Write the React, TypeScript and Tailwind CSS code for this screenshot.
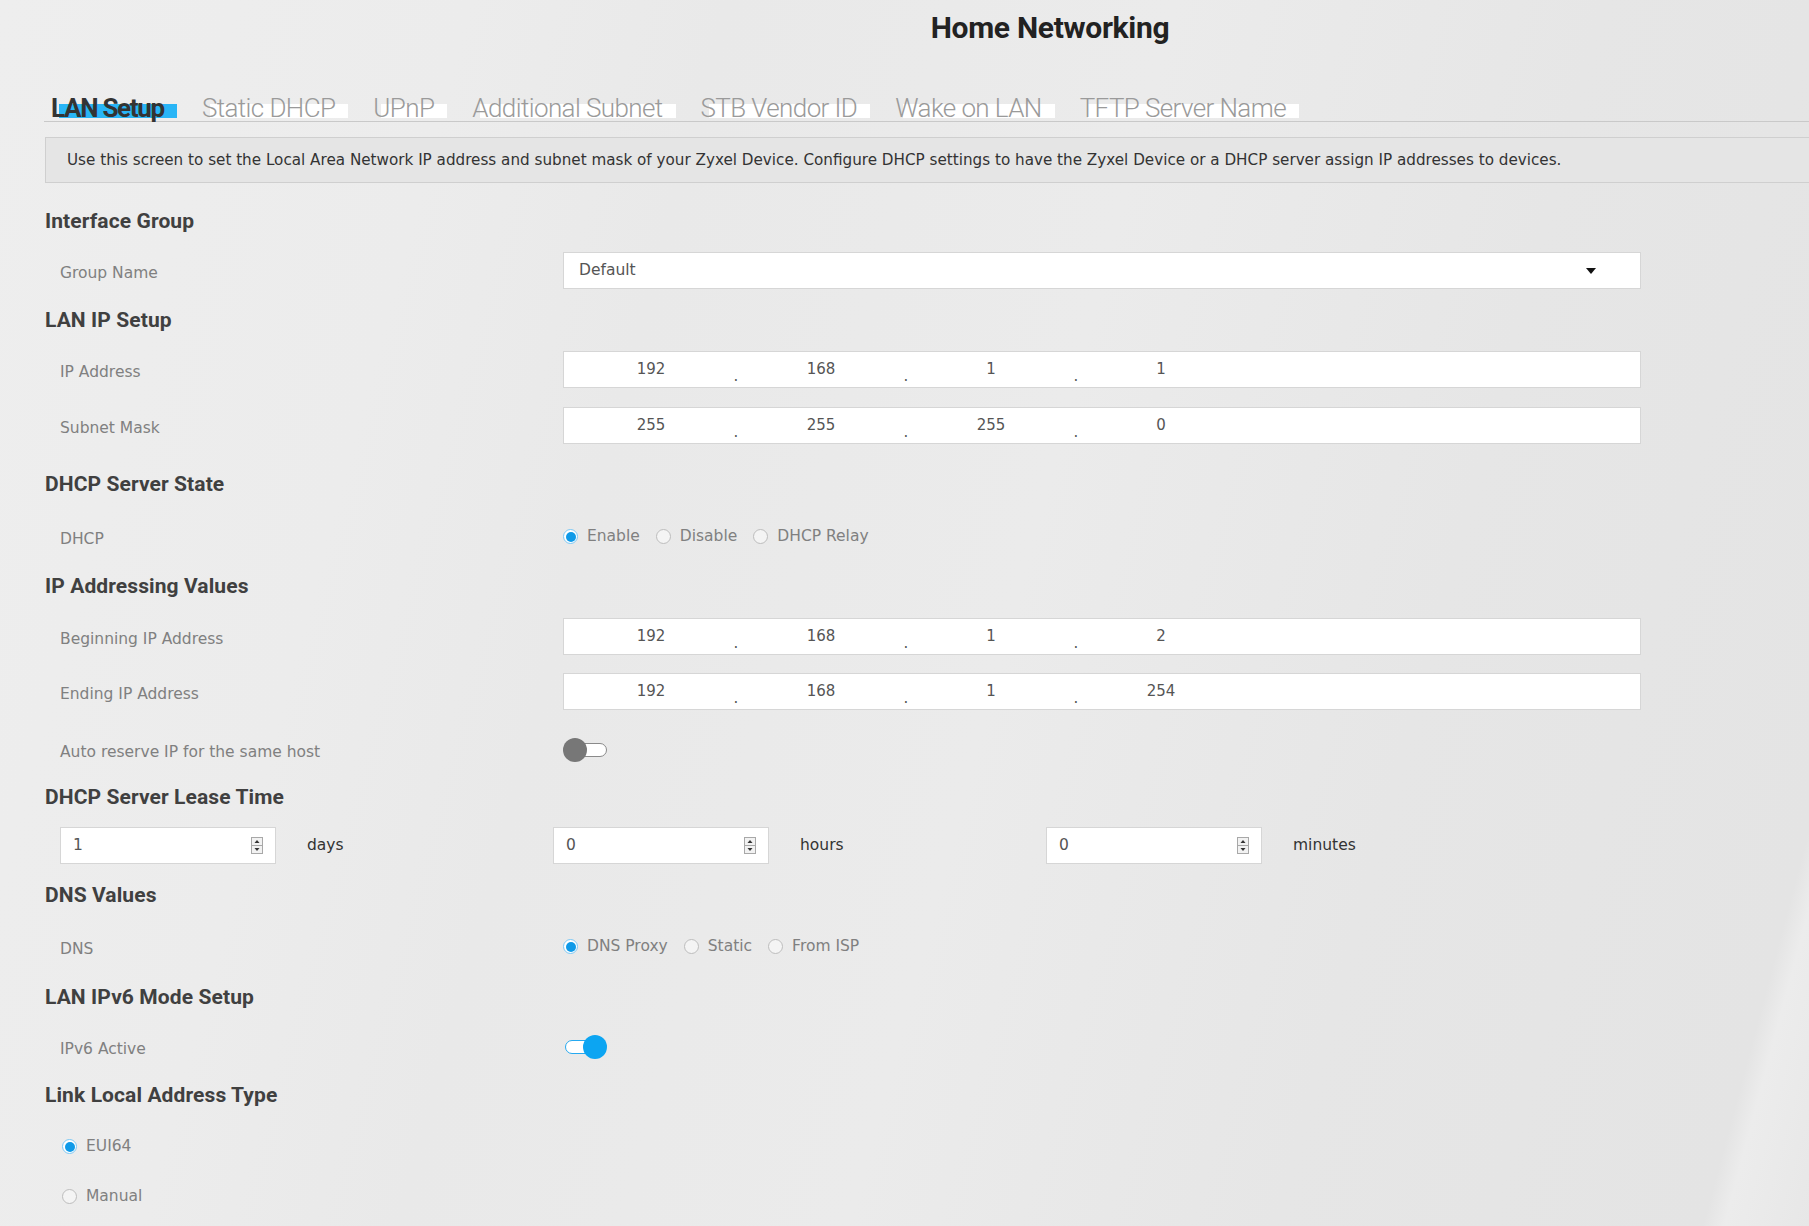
import React from "react";

const TABS = [
  { label: "LAN Setup", active: true },
  { label: "Static DHCP" },
  { label: "UPnP" },
  { label: "Additional Subnet" },
  { label: "STB Vendor ID" },
  { label: "Wake on LAN" },
  { label: "TFTP Server Name" },
];

const body = "font-['DejaVu_Sans',sans-serif]";
const head = "font-['Roboto',sans-serif]";

function Heading({ children, className = "" }: { children: React.ReactNode; className?: string }) {
  return (
    <div className={`flex h-[36px] items-center text-[21px] font-bold tracking-[0.1px] text-[#404040] ${head} ${className}`}>
      {children}
    </div>
  );
}

function Row({ label, children, className = "" }: { label: string; children: React.ReactNode; className?: string }) {
  return (
    <div className={`flex h-[37px] items-center ${className}`}>
      <div className={`w-[518px] shrink-0 pl-[15px] pt-[6px] text-[15.5px] text-[#808080] ${body}`}>{label}</div>
      <div className="flex flex-1 items-center">{children}</div>
    </div>
  );
}

function IpBox({ parts }: { parts: string[] }) {
  return (
    <div className={`flex h-[37px] w-[1078px] items-stretch border border-[#d6d6d6] bg-white pl-[4px] text-[15px] text-[#555] ${body}`}>
      {parts.map((p, i) => (
        <React.Fragment key={i}>
          <div className="flex w-[166px] items-center justify-center">{p}</div>
          {i < 3 && <div className="flex w-[4px] items-end justify-center pb-[3px] leading-none">.</div>}
        </React.Fragment>
      ))}
    </div>
  );
}

function Radio({ checked, label }: { checked?: boolean; label: string }) {
  return (
    <label className={`mr-[16px] flex items-center text-[15.5px] text-[#808080] ${body}`}>
      <span
        className={`mr-[9px] flex h-[15px] w-[15px] items-center justify-center rounded-full border ${
          checked ? "border-[#7cc8f4] bg-white" : "border-[#bdbdbd] bg-[#f4f4f4]"
        }`}
      >
        {checked && <span className="h-[10px] w-[10px] rounded-full bg-[#0f9ae8]" />}
      </span>
      {label}
    </label>
  );
}

function Toggle({ on }: { on?: boolean }) {
  return on ? (
    <div className="relative ml-[2px] h-[24px] w-[42px]">
      <div className="absolute left-0 top-[5px] h-[14px] w-[36px] rounded-full border border-[#26a9f0] bg-white" />
      <div className="absolute right-0 top-0 h-[24px] w-[24px] rounded-full bg-[#0ca5f2]" />
    </div>
  ) : (
    <div className="relative h-[24px] w-[44px]">
      <div className="absolute right-0 top-[5px] h-[14px] w-[36px] rounded-full border border-[#8a8a8a] bg-white" />
      <div className="absolute left-0 top-0 h-[24px] w-[24px] rounded-full bg-[#777777]" />
    </div>
  );
}

function Spinner() {
  return (
    <svg width="12" height="17" viewBox="0 0 12 17" className="shrink-0">
      <rect x="0.5" y="0.5" width="11" height="16" fill="#f2f2f2" stroke="#a8a8a8" />
      <line x1="0.5" y1="8.5" x2="11.5" y2="8.5" stroke="#a8a8a8" />
      <path d="M3.5 6 L6 3 L8.5 6 Z" fill="#333" />
      <path d="M3.5 11 L6 14 L8.5 11 Z" fill="#333" />
    </svg>
  );
}

function NumberBox({ value, unit }: { value: string; unit: string }) {
  return (
    <div className="flex w-[493px] shrink-0 items-center">
      <div className={`flex h-[37px] w-[216px] items-center justify-between border border-[#d6d6d6] bg-white pl-[12px] pr-[12px] text-[15.5px] text-[#555] ${body}`}>
        <span>{value}</span>
        <Spinner />
      </div>
      <span className={`ml-[31px] text-[15.5px] text-[#333] ${body}`}>{unit}</span>
    </div>
  );
}

export default function App() {
  return (
    <div className="min-h-screen w-full overflow-hidden bg-[#eaeaea] bg-[linear-gradient(105deg,#eeeeee_0%,#ececec_22%,#e9e9e9_34%,#ebebeb_55%,#e6e6e6_75%,#e4e4e4_95%,#ececec_96%,#e7e7e7_100%)] pb-[14px]">
      <div className={`flex h-[54px] items-center justify-center pl-[291px] text-[30px] font-bold tracking-[-0.3px] text-[#222] ${head}`}>
        Home Networking
      </div>

      <div className="ml-[44px] mt-[41px] flex items-end border-b border-[#c9c9c9]">
        {TABS.map((t, i) => (
          <div key={t.label} className={`relative ${i === 0 ? "ml-[7px]" : "ml-[38px]"}`}>
            <span
              className={`absolute bottom-[3px] left-[8px] right-[-13px] h-[14px] ${t.active ? "bg-[#29b5f6]" : "bg-white"}`}
            />
            <span
              className={`relative block text-[26px] leading-[26px] ${head} ${
                t.active ? "font-bold tracking-[-1.3px] text-[#333]" : "font-light tracking-[-0.6px] text-[#9a9a9a]"
              }`}
            >
              {t.label}
            </span>
          </div>
        ))}
      </div>

      <div className="ml-[45px] mt-[15px]">
        <div className={`flex h-[46px] items-center border-y border-l border-[#cfcfcf] bg-[#e5e5e5] pl-[21px] text-[15.2px] text-[#333] ${body}`}>
          Use this screen to set the Local Area Network IP address and subnet mask of your Zyxel Device. Configure DHCP settings to have the Zyxel Device or a DHCP server assign IP addresses to devices.
        </div>

        <Heading className="mt-[21px]">Interface Group</Heading>
        <Row label="Group Name" className="mt-[12px]">
          <div className={`flex h-[37px] w-[1078px] items-center justify-between border border-[#d6d6d6] bg-white pl-[15px] pr-[44px] text-[15.5px] text-[#555] ${body}`}>
            <span>Default</span>
            <svg width="10" height="6" viewBox="0 0 10 6">
              <path d="M0 0 L10 0 L5 6 Z" fill="#111" />
            </svg>
          </div>
        </Row>

        <Heading className="mt-[14px]">LAN IP Setup</Heading>
        <Row label="IP Address" className="mt-[12px]">
          <IpBox parts={["192", "168", "1", "1"]} />
        </Row>
        <Row label="Subnet Mask" className="mt-[19px]">
          <IpBox parts={["255", "255", "255", "0"]} />
        </Row>

        <Heading className="mt-[23px]">DHCP Server State</Heading>
        <Row label="DHCP" className="mt-[15px]">
          <Radio checked label="Enable" />
          <Radio label="Disable" />
          <Radio label="DHCP Relay" />
        </Row>

        <Heading className="mt-[14px]">IP Addressing Values</Heading>
        <Row label="Beginning IP Address" className="mt-[13px]">
          <IpBox parts={["192", "168", "1", "2"]} />
        </Row>
        <Row label="Ending IP Address" className="mt-[18px]">
          <IpBox parts={["192", "168", "1", "254"]} />
        </Row>
        <Row label="Auto reserve IP for the same host" className="mt-[21px]">
          <Toggle />
        </Row>

        <Heading className="mt-[12px]">DHCP Server Lease Time</Heading>
        <div className="mt-[11px] flex h-[37px] items-center pl-[15px]">
          <NumberBox value="1" unit="days" />
          <NumberBox value="0" unit="hours" />
          <NumberBox value="0" unit="minutes" />
        </div>

        <Heading className="mt-[14px]">DNS Values</Heading>
        <Row label="DNS" className="mt-[14px]">
          <Radio checked label="DNS Proxy" />
          <Radio label="Static" />
          <Radio label="From ISP" />
        </Row>

        <Heading className="mt-[15px]">LAN IPv6 Mode Setup</Heading>
        <Row label="IPv6 Active" className="mt-[12px]">
          <Toggle on />
        </Row>

        <Heading className="mt-[13px]">Link Local Address Type</Heading>
        <div className="mt-[14px] flex h-[37px] items-center pl-[17px]">
          <Radio checked label="EUI64" />
        </div>
        <div className="mt-[13px] flex h-[37px] items-center pl-[17px]">
          <Radio label="Manual" />
        </div>
      </div>
    </div>
  );
}
